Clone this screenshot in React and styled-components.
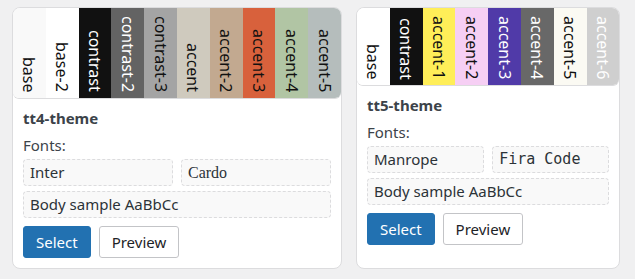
import styled, { createGlobalStyle } from 'styled-components';

const GlobalStyle = createGlobalStyle`
  body {
    margin: 0;
    background: #f0f0f1;
    font-family: "Noto Sans", "Open Sans", sans-serif;
    color: #3c434a;
  }
`;

const THEMES = [
  {
    name: 'tt4-theme',
    fonts: [
      { label: 'Inter', kind: 'sans' },
      { label: 'Cardo', kind: 'serif' },
    ],
    swatches: [
      { name: 'base', bg: '#f9f9f9', fg: '#111' },
      { name: 'base-2', bg: '#ffffff', fg: '#111' },
      { name: 'contrast', bg: '#111111', fg: '#fff' },
      { name: 'contrast-2', bg: '#636363', fg: '#fff' },
      { name: 'contrast-3', bg: '#a4a4a4', fg: '#111' },
      { name: 'accent', bg: '#cfcabe', fg: '#111' },
      { name: 'accent-2', bg: '#c2a990', fg: '#111' },
      { name: 'accent-3', bg: '#d8613c', fg: '#111' },
      { name: 'accent-4', bg: '#b1c5a4', fg: '#111' },
      { name: 'accent-5', bg: '#b5bdbc', fg: '#111' },
    ],
  },
  {
    name: 'tt5-theme',
    fonts: [
      { label: 'Manrope', kind: 'sans' },
      { label: 'Fira Code', kind: 'mono' },
    ],
    swatches: [
      { name: 'base', bg: '#ffffff', fg: '#111' },
      { name: 'contrast', bg: '#111111', fg: '#fff' },
      { name: 'accent-1', bg: '#ffee58', fg: '#111' },
      { name: 'accent-2', bg: '#f6cff4', fg: '#111' },
      { name: 'accent-3', bg: '#503aa8', fg: '#fff' },
      { name: 'accent-4', bg: '#686868', fg: '#fff' },
      { name: 'accent-5', bg: '#fbfaf3', fg: '#111' },
      { name: 'accent-6', bg: '#cfcfcf', fg: '#fff' },
    ],
  },
];

const FONT_STACKS = {
  sans: '"Noto Sans", "Open Sans", sans-serif',
  serif: '"Liberation Serif", serif',
  mono: '"DejaVu Sans Mono", "Liberation Mono", monospace',
};

const Grid = styled.div`
  display: flex;
  align-items: stretch;
  gap: 14px;
  padding: 7px 12px 10px;
`;

const Card = styled.div`
  background: #fff;
  border: 1px solid #dcdcde;
  border-radius: 8px;
  overflow: hidden;
`;

const Strip = styled.div`
  display: flex;
  border-radius: 0 0 6px 6px;
  overflow: hidden;
  box-shadow: 0 1px 0 #dcdcde;
`;

const Swatch = styled.div`
  width: 32.8px;
  display: flex;
  justify-content: center;
  align-items: flex-end;
  padding: 8px 0 6px;
  background: ${(p) => p.$bg};
  color: ${(p) => p.$fg};
`;

const SwatchLabel = styled.span`
  writing-mode: vertical-rl;
  font-size: 16px;
  line-height: 18px;
`;

const Body = styled.div`
  padding: 10px 10px 10px;
`;

const Title = styled.div`
  font-weight: 700;
  font-size: 15px;
  line-height: 20px;
  color: #3c434a;
`;

const Label = styled.div`
  font-size: 15px;
  line-height: 20px;
  margin-top: 7px;
`;

const FontRow = styled.div`
  display: grid;
  grid-template-columns: 1fr 1fr;
  gap: 8px;
  margin-top: 4px;
`;

const FontBox = styled.div`
  border: 1px dashed #dcdcde;
  background: #f9f9f9;
  border-radius: 4px;
  padding: 3px 6px;
  font-size: ${(p) => (p.$kind === 'serif' ? '16px' : '15px')};
  line-height: 19px;
  font-family: ${(p) => FONT_STACKS[p.$kind]};
  color: #2c3338;
`;

const Sample = styled(FontBox)`
  margin-top: 5px;
  white-space: nowrap;
`;

const Actions = styled.div`
  display: flex;
  gap: 8px;
  margin-top: 8px;
`;

const Button = styled.button`
  font-family: "Noto Sans", "Open Sans", sans-serif;
  font-size: 15px;
  height: 32px;
  padding: 0 12px;
  border-radius: 3px;
  cursor: pointer;
  border: 1px solid ${(p) => (p.$primary ? '#2271b1' : '#c3c4c7')};
  background: ${(p) => (p.$primary ? '#2271b1' : '#fff')};
  color: ${(p) => (p.$primary ? '#fff' : '#1d2327')};
`;

function ThemeCard({ theme }) {
  return (
    <Card>
      <Strip>
        {theme.swatches.map((s) => (
          <Swatch key={s.name} $bg={s.bg} $fg={s.fg}>
            <SwatchLabel>{s.name}</SwatchLabel>
          </Swatch>
        ))}
      </Strip>
      <Body>
        <Title>{theme.name}</Title>
        <Label>Fonts:</Label>
        <FontRow>
          {theme.fonts.map((f) => (
            <FontBox key={f.label} $kind={f.kind}>
              {f.label}
            </FontBox>
          ))}
        </FontRow>
        <Sample $kind="sans">Body sample AaBbCc</Sample>
        <Actions>
          <Button $primary>Select</Button>
          <Button>Preview</Button>
        </Actions>
      </Body>
    </Card>
  );
}

export default function App() {
  return (
    <>
      <GlobalStyle />
      <Grid>
        {THEMES.map((t) => (
          <ThemeCard key={t.name} theme={t} />
        ))}
      </Grid>
    </>
  );
}
